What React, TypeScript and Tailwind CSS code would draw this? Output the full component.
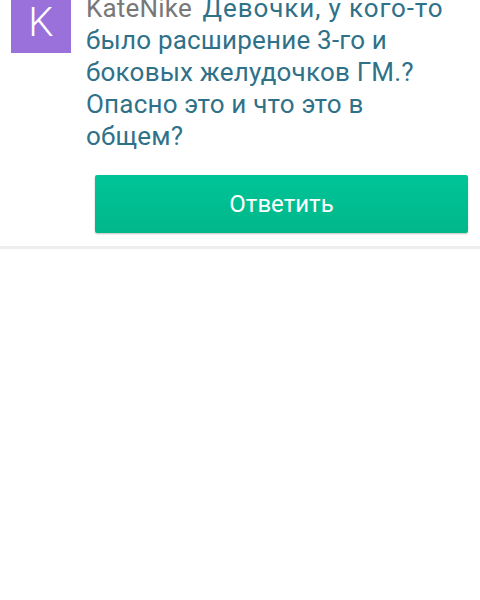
import React from "react";

export default function App() {
  return (
    <div className="w-[480px] h-[600px] bg-white overflow-hidden" style={{ fontFamily: "Roboto, 'Noto Sans', sans-serif" }}>
      <div className="-mt-[8px]">
        <div className="flex items-start pl-[11px] pr-[24px]">
          <div className="mt-[1px] w-[60px] h-[60px] shrink-0 bg-[#9a70db] flex items-center justify-center text-white text-[40px] font-light">
            K
          </div>
          <p className="ml-[15px] text-[26px] leading-[32px] text-[#2f7189] tracking-[0.2px]">
            <span className="text-[#787878] mr-[4px]">KateNike</span>{" "}
            <span className="tracking-[0.9px]">Девочки, у кого-то</span> было расширение 3-го и боковых желудочков ГМ.? Опасно это и что это в общем?
          </p>
        </div>
        <div className="pl-[95px] pr-[12px] mt-[23px]">
          <button className="w-full h-[58px] rounded-[2px] bg-gradient-to-b from-[#00c598] to-[#00b78a] shadow-[0_1px_2px_rgba(0,0,0,0.25)] text-white text-[24px]">
            Ответить
          </button>
        </div>
        <div className="mt-[13px] h-[3px] bg-[#eeeeee]" />
      </div>
    </div>
  );
}
